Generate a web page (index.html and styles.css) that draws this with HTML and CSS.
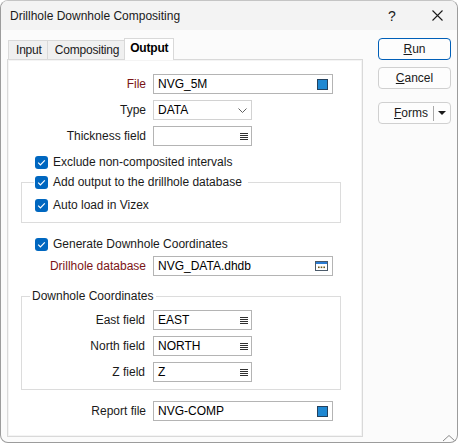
FILE: index.html
```html
<!DOCTYPE html>
<html lang="en">
<head>
    <meta charset="UTF-8" />
    <title>Drillhole Downhole Compositing</title>
    <link rel="stylesheet" href="styles.css">
</head>
<body>
    <div class="window">
        <div class="titlebar">
            <span class="title">Drillhole Downhole Compositing</span>
            <span class="help">?</span>
            <span class="close">
                <svg width="11" height="11" viewBox="0 0 11 11"><path d="M0.5 0.5L10.5 10.5M10.5 0.5L0.5 10.5" stroke="#1a1a1a" stroke-width="1.1" fill="none"/></svg>
            </span>
        </div>

        <div class="client">
            <div class="tabarea">
                <div class="tabs">
                    <div class="tab">Input</div>
                    <div class="tab">Compositing</div>
                    <div class="tab active">Output</div>
                </div>

                <div class="panel">
                    <div class="row first">
                        <span class="lbl req">File</span>
                        <div class="box wide"><span>NVG_5M</span><span class="ico-file"></span></div>
                    </div>
                    <div class="row">
                        <span class="lbl">Type</span>
                        <div class="box narrow combo"><span>DATA</span>
                            <svg width="9" height="5" viewBox="0 0 9 5"><path d="M0.5 0.5L4.5 4.5L8.5 0.5" stroke="#606060" fill="none"/></svg>
                        </div>
                    </div>
                    <div class="row">
                        <span class="lbl">Thickness field</span>
                        <div class="box narrow"><span></span><span class="ico-list"></span></div>
                    </div>

                    <div class="check exclude"><span class="cb"></span>Exclude non-composited intervals</div>

                    <fieldset class="group dbgroup">
                        <legend><span class="check"><span class="cb"></span>Add output to the drillhole database</span></legend>
                        <div class="check"><span class="cb"></span>Auto load in Vizex</div>
                    </fieldset>

                    <div class="check generate"><span class="cb"></span>Generate Downhole Coordinates</div>
                    <div class="row dbrow">
                        <span class="lbl req">Drillhole database</span>
                        <div class="box wide"><span>NVG_DATA.dhdb</span>
                            <svg width="13" height="10" viewBox="0 0 13 10">
                                <rect x="0.5" y="0.5" width="12" height="9" fill="#fff" stroke="#4a5a6a"/>
                                <rect x="1" y="1" width="11" height="2" fill="#2b7cd3"/>
                                <rect x="3" y="5.5" width="1.6" height="1.6" fill="#6b5a20"/>
                                <rect x="5.7" y="5.5" width="1.6" height="1.6" fill="#6b5a20"/>
                                <rect x="8.4" y="5.5" width="1.6" height="1.6" fill="#6b5a20"/>
                            </svg>
                        </div>
                    </div>

                    <fieldset class="group coords">
                        <legend>Downhole Coordinates</legend>
                        <div class="row first">
                            <span class="lbl">East field</span>
                            <div class="box narrow"><span>EAST</span><span class="ico-list"></span></div>
                        </div>
                        <div class="row">
                            <span class="lbl">North field</span>
                            <div class="box narrow"><span>NORTH</span><span class="ico-list"></span></div>
                        </div>
                        <div class="row">
                            <span class="lbl">Z field</span>
                            <div class="box narrow"><span>Z</span><span class="ico-list"></span></div>
                        </div>
                    </fieldset>

                    <div class="row report">
                        <span class="lbl">Report file</span>
                        <div class="box wide"><span>NVG-COMP</span><span class="ico-file"></span></div>
                    </div>
                </div>
            </div>

            <div class="buttons">
                <div class="btn default"><u>R</u>un</div>
                <div class="btn cancel"><u>C</u>ancel</div>
                <div class="btn forms">
                    <span class="forms-main"><u>F</u>orms</span>
                    <span class="sep"></span>
                    <span class="arrow"></span>
                </div>
            </div>
        </div>

        <svg class="grip" width="14" height="8" viewBox="0 0 14 8"><path d="M1 7L7 1.5L13 7" stroke="#8a8a8a" fill="none"/></svg>
    </div>
</body>
</html>
```

FILE: styles.css
```css
* {
    margin: 0;
    padding: 0;
    box-sizing: border-box;
}
body {
    background-color: #ffffff;
    font-family: "Liberation Sans", Arial, sans-serif;
    font-size: 12px;
    color: #1a1a1a;
}
.window {
    position: relative;
    width: 458px;
    height: 443px;
    border: 1px solid #9c9c9c;
    border-top-color: #c4c4c4;
    border-radius: 8px;
    background-color: #fbfbfb;
    overflow: hidden;
}
.titlebar {
    height: 29px;
    background-color: #f3f3f3;
    display: flex;
    align-items: center;
}
.title {
    padding-left: 9px;
    flex: 1;
    color: #1a1a1a;
}
.help {
    width: 36px;
    text-align: center;
    font-size: 14px;
    margin-right: 9px;
}
.close {
    width: 36px;
    margin-right: 2px;
    display: flex;
    justify-content: center;
}
.client {
    display: flex;
    padding: 8px 0 0 6px;
}
.tabarea {
    width: 356px;
}
.tabs {
    height: 21px;
    display: flex;
    align-items: flex-end;
    padding-left: 1px;
}
.tab {
    height: 19px;
    line-height: 18px;
    padding: 0 5px 0 7px;
    border: 1px solid #d9d9d9;
    border-bottom: none;
    background-color: #f0f0f0;
    margin-left: -1px;
    letter-spacing: -0.2px;
}
.tab:first-child {
    margin-left: 0;
}
.tab.active {
    position: relative;
    height: 22px;
    line-height: 19px;
    margin-bottom: -1px;
    padding: 0 5px;
    background-color: #ffffff;
    font-weight: bold;
    color: #000;
}
.panel {
    height: 378px;
    border: 1px solid #d9d9d9;
    box-shadow: inset 0 0 0 1px #f4f4f4;
    background-color: #ffffff;
    padding-top: 14px;
}
.row {
    display: flex;
    align-items: center;
    height: 20px;
    margin-top: 6px;
}
.row.first {
    margin-top: 0;
}
.lbl {
    width: 138px;
    margin-right: 7px;
    text-align: right;
}
.lbl.req {
    color: #7b1416;
}
.box {
    height: 20px;
    border: 1px solid #b4b4b4;
    background-color: #ffffff;
    display: flex;
    align-items: center;
    justify-content: space-between;
    padding: 0 4px 0 4px;
    color: #000;
}
.box.wide {
    width: 180px;
}
.box.narrow {
    width: 99px;
    padding-right: 3px;
}
.box.combo {
    border-color: #d2d2d2;
    padding-right: 4px;
}
.ico-file {
    width: 11px;
    height: 11px;
    background-color: #1f88d2;
    border: 1px solid #23415e;
}
.ico-list {
    width: 8px;
    height: 7px;
    background: repeating-linear-gradient(to bottom, #303030 0, #303030 1px, transparent 1px, transparent 2px);
}
.check {
    display: flex;
    align-items: center;
    height: 16px;
    gap: 5px;
}
.cb {
    width: 13px;
    height: 13px;
    border-radius: 3px;
    background-color: #0067c0;
    background-image: url("data:image/svg+xml,%3Csvg xmlns='http://www.w3.org/2000/svg' width='13' height='13'%3E%3Cpath d='M3.2 6.6L5.4 8.8L9.8 4.3' stroke='white' stroke-width='1.2' fill='none'/%3E%3C/svg%3E");
}
.exclude {
    margin: 8px 0 0 27px;
}
.group {
    min-width: 0;
    margin: 0 21px 0 13px;
    border: 1px solid #dcdcdc;
}
.dbgroup {
    margin-top: 4px;
    padding: 7px 0 9px 0;
}
.dbgroup legend {
    margin-left: 12px;
    padding: 0 6px 0 1px;
}
.dbgroup > .check {
    margin-left: 13px;
}
.generate {
    margin: 13px 0 0 27px;
}
.dbrow {
    margin-top: 4px;
}
.coords {
    margin-top: 12px;
    padding: 6px 0 7px 0;
}
.coords legend {
    margin-left: 8px;
    padding: 0 3px 0 2px;
    line-height: 16px;
}
.coords .lbl {
    width: 123px;
    margin-right: 8px;
}
.report {
    margin-top: 11px;
}
.buttons {
    margin-left: 15px;
    width: 73px;
}
.btn {
    height: 22px;
    border: 1px solid #d0d0d0;
    border-radius: 4px;
    background-color: #fdfdfd;
    display: flex;
    align-items: center;
    justify-content: center;
    color: #1a1a1a;
}
.btn.default {
    border-color: #005fb8;
}
.btn.cancel {
    margin-top: 7px;
}
.btn.forms {
    margin-top: 13px;
    justify-content: flex-end;
}
.forms-main {
    padding-right: 5px;
}
.sep {
    width: 1px;
    height: 15px;
    background-color: #a8a8a8;
}
.arrow {
    width: 16px;
    display: flex;
    justify-content: center;
}
.arrow::after {
    content: "";
    border-left: 4px solid transparent;
    border-right: 4px solid transparent;
    border-top: 4px solid #1a1a1a;
}
.grip {
    position: absolute;
    right: 1px;
    bottom: 0;
}
```
